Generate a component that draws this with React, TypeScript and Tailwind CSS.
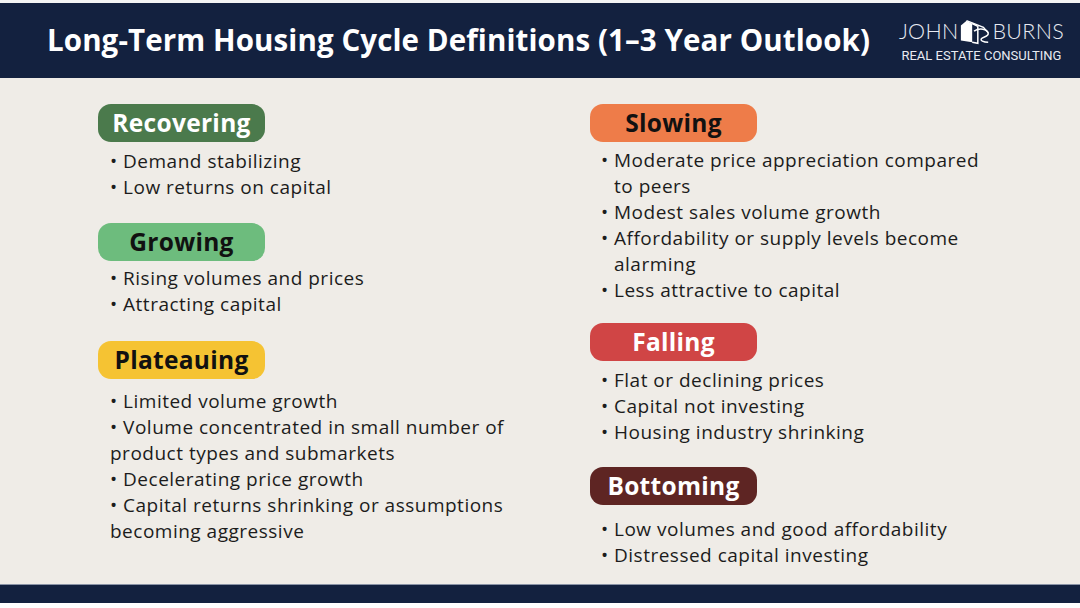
import React from "react";

type Section = { title: string; bg: string; fg: string; items: string[]; mt: string; gap: string };

const left: Section[] = [
  { title: "Recovering", bg: "bg-[#4b7a4c]", fg: "text-white", items: ["Demand stabilizing", "Low returns on capital"], mt: "mt-0", gap: "mt-[6px]" },
  { title: "Growing", bg: "bg-[#6dbc7d]", fg: "text-[#111]", items: ["Rising volumes and prices", "Attracting capital"], mt: "mt-[23px]", gap: "mt-[4px]" },
  {
    title: "Plateauing",
    bg: "bg-[#f5c333]",
    fg: "text-[#111]",
    items: [
      "Limited volume growth",
      "Volume concentrated in small number of product types and submarkets",
      "Decelerating price growth",
      "Capital returns shrinking or assumptions becoming aggressive",
    ],
    mt: "mt-[24px]",
    gap: "mt-[9px]",
  },
];

const right: Section[] = [
  {
    title: "Slowing",
    bg: "bg-[#ee7c49]",
    fg: "text-[#111]",
    items: [
      "Moderate price appreciation compared to peers",
      "Modest sales volume growth",
      "Affordability or supply levels become alarming",
      "Less attractive to capital",
    ],
    mt: "mt-0",
    gap: "mt-[5px]",
  },
  { title: "Falling", bg: "bg-[#d04545]", fg: "text-white", items: ["Flat or declining prices", "Capital not investing", "Housing industry shrinking"], mt: "mt-[20px]", gap: "mt-[6px]" },
  { title: "Bottoming", bg: "bg-[#5e2523]", fg: "text-white", items: ["Low volumes and good affordability", "Distressed capital investing"], mt: "mt-[22px]", gap: "mt-[11px]" },
];

function Pill({ s }: { s: Section }) {
  return (
    <div className={`${s.bg} ${s.fg} w-[167px] h-[38px] rounded-[13px] flex items-center justify-center text-[24.5px] font-bold tracking-[0.3px]`}>
      {s.title}
    </div>
  );
}

function LeftSection({ s }: { s: Section }) {
  return (
    <div className={s.mt}>
      <Pill s={s} />
      <div className={`${s.gap} pl-[12px] w-[430px] text-[19px] leading-[26px] tracking-[0.5px] text-[#1c1c1c]`}>
        {s.items.map((it) => (
          <div key={it}>{"• " + it}</div>
        ))}
      </div>
    </div>
  );
}

function RightSection({ s }: { s: Section }) {
  return (
    <div className={s.mt}>
      <Pill s={s} />
      <div className={`${s.gap} pl-[11px] text-[19px] leading-[26px] tracking-[0.5px] text-[#1c1c1c]`}>
        {s.items.map((it) => (
          <div key={it} className="flex w-[395px]">
            <span className="w-[13px] shrink-0">•</span>
            <span>{it}</span>
          </div>
        ))}
      </div>
    </div>
  );
}

function HouseIcon() {
  return (
    <svg width="32" height="30" viewBox="0 0 34 30" className="mx-[1px]">
      <path d="M2 8 L8 3 L14 6 L14 26 L2 24 Z" fill="white" />
      <path d="M14 6 L20 9 L20 27 L14 26" fill="none" stroke="white" strokeWidth="1.6" />
      <path d="M16 14 C22 10 30 12 31 16 C32 20 26 20 24 22 C22 24 26 26 31 26" fill="none" stroke="white" strokeWidth="1.6" />
      <path d="M8 3 L26 10 L31 16" fill="none" stroke="white" strokeWidth="1.4" />
    </svg>
  );
}

export default function App() {
  return (
    <div className="w-[1080px] h-[608px] bg-white flex flex-col overflow-hidden" style={{ fontFamily: "'Open Sans', 'Liberation Sans', sans-serif" }}>
      <div className="h-[3px] bg-[#f4f4f4]" />
      <div className="h-[75px] bg-[#13213f] flex items-center pl-[47px] pr-[16px]">
        <h1 className="text-white text-[29.5px] font-bold tracking-[0.1px] flex-1 whitespace-nowrap">
          Long-Term Housing Cycle Definitions (1–3 Year Outlook)
        </h1>
        <div className="flex flex-col items-center text-[#e8ebf2] mt-[-2px]" style={{ fontFamily: "Lato, 'Open Sans', sans-serif" }}>
          <div className="flex items-center h-[30px] text-[21.5px] font-light leading-none tracking-[0.3px]">
            <span>JOHN</span>
            <HouseIcon />
            <span>BURNS</span>
          </div>
          <div className="text-[13px] leading-none mt-[2px] font-normal" style={{ fontFamily: "Roboto, sans-serif" }}>
            REAL ESTATE CONSULTING
          </div>
        </div>
      </div>
      <div className="flex-1 bg-[#efece7] grid grid-cols-[492px_1fr] pl-[98px] pt-[26px]">
        <div className="flex flex-col">
          {left.map((s) => (
            <LeftSection key={s.title} s={s} />
          ))}
        </div>
        <div className="flex flex-col">
          {right.map((s) => (
            <RightSection key={s.title} s={s} />
          ))}
        </div>
      </div>
      <div className="h-[1px] bg-[#8a93a6]" />
      <div className="h-[18px] bg-[#13213f]" />
      <div className="h-[5px] bg-white" />
    </div>
  );
}
